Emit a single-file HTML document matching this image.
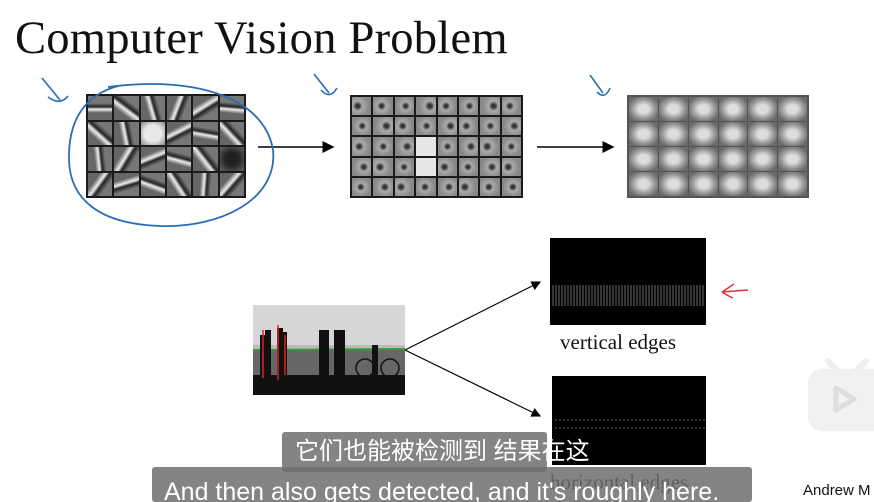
<!DOCTYPE html>
<html><head><meta charset="utf-8"><style>
body{margin:0;width:874px;height:502px;background:#fff;overflow:hidden;position:relative;font-family:"Liberation Serif",serif}
.t{position:absolute;left:15px;top:11px;font-size:46.6px;color:#111;letter-spacing:0.2px;white-space:nowrap}
.g{position:absolute;display:grid;background:#1a1a1a;padding:2px;gap:2px}
.g div{background:#7a7a7a}
.sub{position:absolute;background:rgba(110,110,110,0.85);color:#fff;font-family:"Liberation Sans","Noto Sans CJK SC",sans-serif;white-space:nowrap}
</style></head><body>
<div class="t">Computer Vision Problem</div>
<div class="g" id="g1" style="left:86px;top:94px;width:156px;height:100px;grid-template-columns:repeat(6,1fr);grid-template-rows:repeat(4,1fr)"></div>
<div class="g" id="g2" style="left:350px;top:95px;width:169px;height:99px;grid-template-columns:repeat(8,1fr);grid-template-rows:repeat(5,1fr)"></div>
<div class="g" id="g3" style="left:627px;top:95px;width:178px;height:99px;grid-template-columns:repeat(6,1fr);grid-template-rows:repeat(4,1fr);background:#555;gap:1px"></div>
<svg width="874" height="502" style="position:absolute;left:0;top:0">
<defs><marker id="a" markerWidth="8" markerHeight="8" refX="7" refY="4" orient="auto"><path d="M0,0L8,4L0,8z" fill="#000"/></marker></defs>
<line x1="258" y1="147" x2="333" y2="147" stroke="#000" stroke-width="1.5" marker-end="url(#a)"/>
<line x1="537" y1="147" x2="613" y2="147" stroke="#000" stroke-width="1.5" marker-end="url(#a)"/>
<line x1="405" y1="350" x2="540" y2="282" stroke="#000" stroke-width="1.2" marker-end="url(#a)"/>
<line x1="405" y1="350" x2="540" y2="416" stroke="#000" stroke-width="1.2" marker-end="url(#a)"/>
<path d="M108,87 C200,75 265,100 273,150 C278,200 220,228 160,226 C100,224 70,200 69,160 C68,120 85,95 118,86" fill="none" stroke="#2a6db5" stroke-width="1.8"/>
<path d="M42,78 L60,100 M48,97 Q60,106 68,96" fill="none" stroke="#2a6db5" stroke-width="1.6"/>
<path d="M314,74 L329,93 M321,90 Q330,100 337,88" fill="none" stroke="#2a6db5" stroke-width="1.6"/>
<path d="M590,75 L603,93 M597,92 Q605,100 610,88" fill="none" stroke="#2a6db5" stroke-width="1.6"/>
<path d="M722,292 Q728,296 733,298 M722,292 L748,290 M722,292 Q728,288 734,284" fill="none" stroke="#d33" stroke-width="1.4"/>
<rect x="253" y="305" width="152" height="90" fill="#bbb"/>
<rect x="253" y="305" width="152" height="40" fill="#d6d6d6"/>
<rect x="253" y="350" width="152" height="28" fill="#666"/>
<rect x="253" y="375" width="152" height="20" fill="#111"/>
<line x1="253" y1="350" x2="405" y2="349" stroke="#3a9a3a" stroke-width="2"/>
<path d="M263,375V335M268,375V330M280,375V328M284,375V332M322,375V330M326,375V330M337,375V330M342,375V330M375,375V345" stroke="#111" stroke-width="6"/>
<path d="M263,378V330M278,380V325M285,375V335" stroke="#d22" stroke-width="1.5" fill="none"/>
<circle cx="365" cy="368" r="9" fill="none" stroke="#111" stroke-width="1.5"/><circle cx="390" cy="368" r="9" fill="none" stroke="#111" stroke-width="1.5"/>
<rect x="550" y="238" width="156" height="87" fill="#000"/>
<rect x="552" y="376" width="154" height="89" fill="#000"/>
<g id="vl" stroke="#999" stroke-width="0.7"></g>
</svg>
<div style="position:absolute;left:560px;top:330px;font-size:21px;color:#111">vertical edges</div>
<div style="position:absolute;left:550px;top:470px;font-size:21px;color:#111">horizontal edges</div>
<div style="position:absolute;left:806px;top:355px;width:68px;height:80px;">
<svg width="68" height="80"><path d="M22,6 L32,16 M60,6 L50,16" stroke="#eee" stroke-width="6" stroke-linecap="round"/><rect x="2" y="14" width="80" height="62" rx="14" fill="#f1f1f1"/><path d="M30,33 L48,44 L30,55z" fill="none" stroke="#ddd" stroke-width="5" stroke-linejoin="round"/></svg></div>
<div class="sub" style="left:282px;top:432px;width:265px;height:40px;font-size:24px;line-height:40px;padding-left:13px;box-sizing:border-box;border-radius:3px;overflow:visible">它们也能被检测到 结果在这</div>
<div class="sub" style="left:152px;top:467px;width:600px;height:35px;font-size:25px;line-height:50px;padding-left:12px;box-sizing:border-box;border-radius:3px;overflow:hidden">And then also gets detected, and it's roughly here.</div>
<div style="position:absolute;left:803px;top:482px;font-family:'Liberation Sans',sans-serif;font-size:15px;color:#111">Andrew M</div>
<script>
function fill(id,n,f){var g=document.getElementById(id);for(var i=0;i<n;i++){var d=document.createElement('div');d.style.background=f(i);g.appendChild(d);}}
fill('g1',24,function(i){return i==8?'radial-gradient(#e8e8e8 50%,#888)':i==17?'radial-gradient(#222 40%,#666)':'linear-gradient('+(i*37%180)+'deg,#666 30%,#eee 45%,#222 55%,#777 70%)';});
fill('g2',40,function(i){return i==19||i==27?'#e6e6e6':'radial-gradient(circle at '+(30+i*13%40)+'% 50%,#333 10%,#aaa 30%,#888 70%)';});
fill('g3',24,function(i){return 'radial-gradient(ellipse at 50% 50%,#ddd 25%,#999 55%,#6a6a6a 80%)';});
var vl=document.getElementById('vl'),s='';
for(var x=553;x<704;x+=3){s+='<line x1="'+x+'" y1="285" x2="'+x+'" y2="306"/>';}
for(var x=555;x<704;x+=4){s+='<line x1="'+x+'" y1="420" x2="'+(x+2)+'" y2="420"/><line x1="'+x+'" y1="428" x2="'+(x+2)+'" y2="428"/>';}
vl.innerHTML=s;
</script>
</body></html>
